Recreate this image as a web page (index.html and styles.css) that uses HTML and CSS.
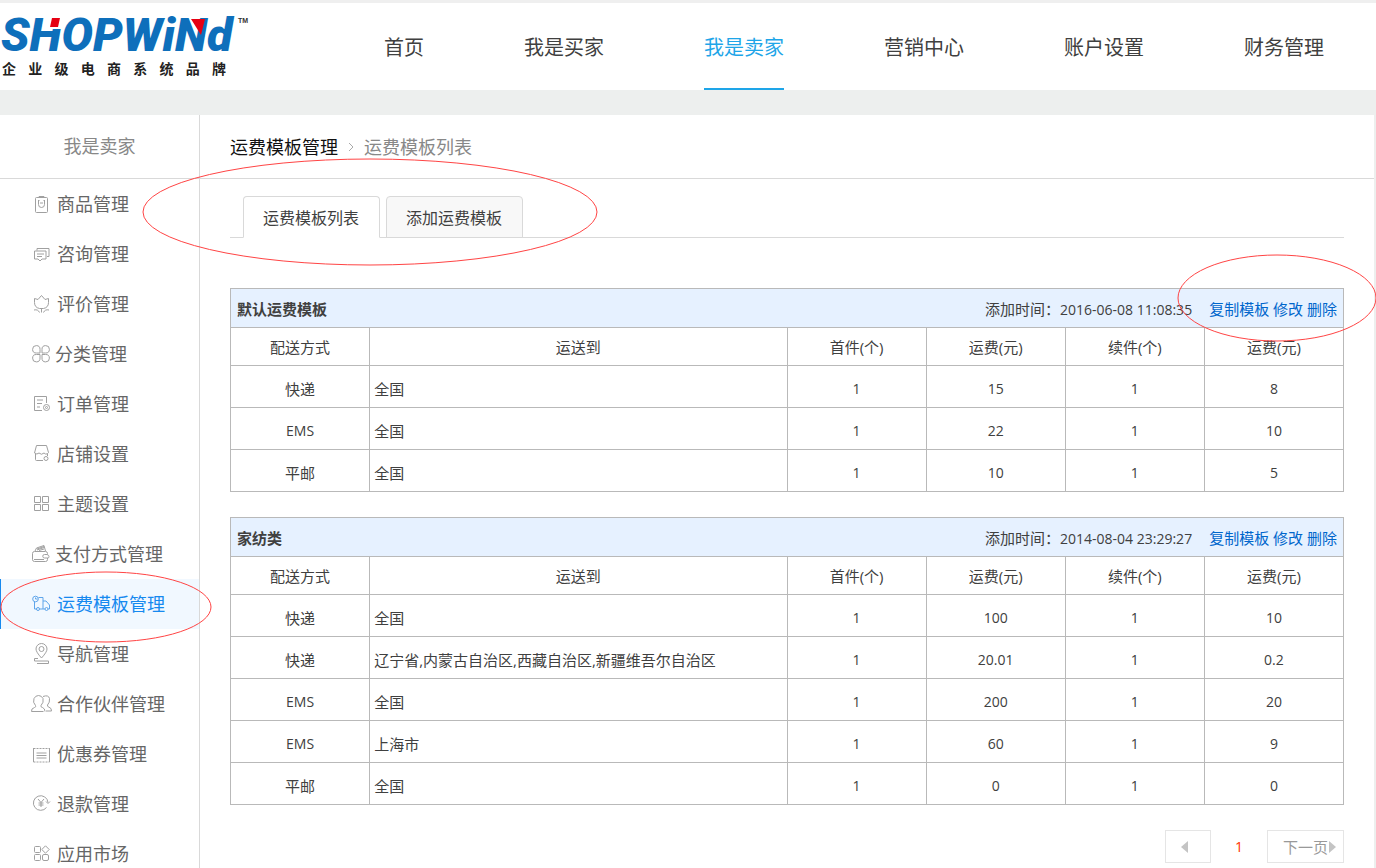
FILE: index.html
```html
<!DOCTYPE html>
<html lang="zh-CN">
<head>
<meta charset="utf-8">
<title>运费模板管理</title>
<link rel="stylesheet" href="styles.css">
</head>
<body>
<header class="header">
  <a class="logo" href="#" aria-label="ShopWind">
    <svg class="logo-mark" viewBox="0 0 250 42" aria-hidden="true">
      <text class="logo-word" x="1" y="38">SHOPWiNd</text>
      <path class="logo-gap" d="M49 3h17l-4 13h-15z"/>
      <path class="logo-red" d="M52 5h8l-2 9h-8z"/>
      <path class="logo-red" d="M191 6h14l-4 16z"/>
      <text class="logo-tm" x="238" y="10">TM</text>
    </svg>
    <span class="slogan"><i>企</i><i>业</i><i>级</i><i>电</i><i>商</i><i>系</i><i>统</i><i>品</i><i>牌</i></span>
  </a>
  <nav class="nav">
    <a href="#">首页</a><a href="#">我是买家</a><a class="current" href="#">我是卖家</a><a href="#">营销中心</a><a href="#">账户设置</a><a href="#">财务管理</a>
  </nav>
</header>
<div class="page">
  <aside class="sidebar">
    <h2 class="side-title">我是卖家</h2>
    <nav class="menu">
      <a href="#"><svg class="icon" viewBox="0 0 18 18"><rect x="3.500" y="2.500" width="12" height="15" rx="1"/><path d="M7 2.500V1.500h5v1M6 5.500h1.500M11.500 5.500H13M6.500 5.500v4q0 3 3 3t3-3v-4M8 8h3"/></svg>商品管理</a>
      <a href="#"><svg class="icon" viewBox="0 0 18 18"><path d="M5 5.500V3.500h12v8h-2M2.500 6H14v8h-4l-2 2-2-2H2.500zM5 9h7M5 11.500h5"/></svg>咨询管理</a>
      <a href="#"><svg class="icon" viewBox="0 0 18 18"><path d="M2.500 3.500 6 4.500l3.500-4 3.500 4 3.500-1v4q0 5-5 6H7.500q-5-1-5-6zM9.500 13.500v4M2 15q4-1 5.500 2.500M17 15q-4-1-5.500 2.500"/></svg>评价管理</a>
      <a href="#" class="near"><svg class="icon" viewBox="0 0 18 18"><path d="M8 8H4.500A3.700 3.700 0 1 1 8 4.500zM10 8h3.500A3.700 3.700 0 1 0 10 4.500zM8 9.500H4.500A3.700 3.700 0 1 0 8 13zM10 9.500h3.500A3.700 3.700 0 1 1 10 13z"/></svg>分类管理</a>
      <a href="#"><svg class="icon" viewBox="0 0 18 18"><path d="M14.500 8V1.500h-12v14H10M5 5h6M5 8.500h5M5 12h3"/><circle cx="14.500" cy="12.500" r="3"/><circle cx="14.500" cy="12.500" r="1"/></svg>订单管理</a>
      <a href="#"><svg class="icon" viewBox="0 0 18 18"><path d="M4.500.5h10l2 7q-1 2-3 1.500L12 8q-2.500 2.500-5 0-2 2-4.500 0zM3.500 9v5.500q0 1 1 1H11M15.500 9v2"/><circle cx="14" cy="13.500" r="2"/></svg>店铺设置</a>
      <a href="#"><svg class="icon" viewBox="0 0 18 18"><path d="M2.500 1.500h6v6h-6zM10.500 1.500h6v6h-6zM2.500 9.500h6v6h-6zM10.500 9.500h6v6h-6z"/></svg>主题设置</a>
      <a href="#" class="near"><svg class="icon" viewBox="0 0 18 18"><path d="M2.500 6.500h11q2 0 2 2v1M15.500 13v1.500q0 2-2 2h-11q-2 0-2-2v-6q0-2 2-2M15 9.500h-2.500a1.700 1.700 0 0 0 0 3.500H16q1 0 1-1.500t-2-2M3 6l1.500-3L12 .5 13.500 6M5 5l7-2.500M5 4l7-2.500M7 5.500l5-1.500M2 14.500h10"/></svg>支付方式管理</a>
      <a class="active" href="#"><svg class="icon" viewBox="0 0 18 18"><circle cx="3.500" cy="4" r="2.800"/><path d="M3.500 2.500V4h2M2.500 7v7H5M6.500 2.500h4.500V14H7.500M11 6h3l3.500 4v4h-1.500M13 14h-2"/><circle cx="6" cy="14" r="1.500"/><circle cx="14.500" cy="14" r="1.500"/></svg>运费模板管理</a>
      <a href="#"><svg class="icon" viewBox="0 0 18 18"><path d="M9.500 13Q4 7 4 4a5.500 5.500 0 0 1 11 0q0 3-5.500 9zM6 13.500H2.500V16h14v2.500H5"/><circle cx="9.500" cy="4" r="2.500"/></svg>导航管理</a>
      <a href="#"><svg class="icon" viewBox="0 0 18 18"><path d="M11.500 16.500H-.5q-.5-3 3-4 2-.7 1-2-3-3-1.500-7 1.500-3 4.500-3t4.500 3q1 4-2 7-.7 1.500 1.500 2 2.500 1 2.500 4M11 1.500q5.500-2 6.500 2 .5 4-2 6.500-.5 1.500 1.500 2.200 2.700.8 2.500 3.800h-5.500"/></svg>合作伙伴管理</a>
      <a href="#"><svg class="icon" viewBox="0 0 18 18"><path d="M1.500 3v14M17.500 3v14M4.500 8h10M4.500 10.500h10M4.500 13h10"/><path stroke-dasharray="2 1" d="M1.500 3.500h16M1.500 17h16"/></svg>优惠券管理</a>
      <a href="#"><svg class="icon" viewBox="0 0 18 18"><path d="M14.500 12.500A7.300 7.300 0 1 1 16 7.500M14 6.500l2 2 2-2M6 4l3 3.500L12 4M9 7.500V12M6.500 8h5M6.500 10h5"/></svg>退款管理</a>
      <a href="#"><svg class="icon" viewBox="0 0 18 18"><rect x="2.500" y="1.500" width="6" height="6" rx="1"/><path d="m13.500.8 3.700 3.700-3.700 3.700-3.700-3.700z"/><rect x="2.500" y="9.500" width="6" height="6" rx="1"/><rect x="10.500" y="9.500" width="6" height="6" rx="1.500"/></svg>应用市场</a>
    </nav>
  </aside>
  <main class="main">
    <div class="crumbs">
      <a href="#">运费模板管理</a>
      <svg class="chevron" viewBox="0 0 6 10"><path d="m1 1 4 4-4 4"/></svg>
      <span>运费模板列表</span>
    </div>
    <div class="content">
      <div class="tabs">
        <a class="tab selected" href="#">运费模板列表</a>
        <a class="tab" href="#">添加运费模板</a>
      </div>

      <table class="rates">
        <colgroup><col class="narrow"><col class="wide"><col class="narrow"><col class="narrow"><col class="narrow"><col class="narrow"></colgroup>
        <thead>
          <tr class="title-row"><th colspan="6"><div class="title-bar"><strong>默认运费模板</strong><span class="added">添加时间：<time>2016-06-08 11:08:35</time></span><span class="actions"><a href="#">复制模板</a> <a href="#">修改</a> <a href="#">删除</a></span></div></th></tr>
          <tr class="head-row"><th>配送方式</th><th>运送到</th><th>首件(个)</th><th>运费(元)</th><th>续件(个)</th><th>运费(元)</th></tr>
        </thead>
        <tbody>
          <tr><td>快递</td><td class="area">全国</td><td>1</td><td>15</td><td>1</td><td>8</td></tr>
          <tr><td class="latin">EMS</td><td class="area">全国</td><td>1</td><td>22</td><td>1</td><td>10</td></tr>
          <tr><td>平邮</td><td class="area">全国</td><td>1</td><td>10</td><td>1</td><td>5</td></tr>
        </tbody>
      </table>

      <table class="rates">
        <colgroup><col class="narrow"><col class="wide"><col class="narrow"><col class="narrow"><col class="narrow"><col class="narrow"></colgroup>
        <thead>
          <tr class="title-row"><th colspan="6"><div class="title-bar"><strong>家纺类</strong><span class="added">添加时间：<time>2014-08-04 23:29:27</time></span><span class="actions"><a href="#">复制模板</a> <a href="#">修改</a> <a href="#">删除</a></span></div></th></tr>
          <tr class="head-row"><th>配送方式</th><th>运送到</th><th>首件(个)</th><th>运费(元)</th><th>续件(个)</th><th>运费(元)</th></tr>
        </thead>
        <tbody>
          <tr><td>快递</td><td class="area">全国</td><td>1</td><td>100</td><td>1</td><td>10</td></tr>
          <tr><td>快递</td><td class="area">辽宁省,内蒙古自治区,西藏自治区,新疆维吾尔自治区</td><td>1</td><td>20.01</td><td>1</td><td>0.2</td></tr>
          <tr><td class="latin">EMS</td><td class="area">全国</td><td>1</td><td>200</td><td>1</td><td>20</td></tr>
          <tr><td class="latin">EMS</td><td class="area">上海市</td><td>1</td><td>60</td><td>1</td><td>9</td></tr>
          <tr><td>平邮</td><td class="area">全国</td><td>1</td><td>0</td><td>1</td><td>0</td></tr>
        </tbody>
      </table>

      <div class="pager">
        <a class="page-btn prev" href="#" aria-label="上一页"><svg class="arrow" viewBox="0 0 7 12"><path d="M7 0v12L0 6z"/></svg></a>
        <span class="page-now">1</span>
        <a class="page-btn next" href="#">下一页<svg class="arrow" viewBox="0 0 7 12"><path d="M0 0v12l7-6z"/></svg></a>
      </div>
    </div>
  </main>
</div>
<svg class="mark mark-tabs" viewBox="0 0 456 108"><ellipse cx="228" cy="54" rx="227" ry="53"/></svg>
<svg class="mark mark-actions" viewBox="0 0 200 88"><ellipse cx="100" cy="44" rx="99" ry="43"/></svg>
<svg class="mark mark-menu" viewBox="0 0 213 72"><ellipse cx="106" cy="36" rx="105" ry="35"/></svg>
</body>
</html>
```

FILE: styles.css
```css
* { box-sizing: border-box; }
body {
  margin: 0;
  position: relative;
  height: 100vh;
  overflow: hidden;
  background: #edefee;
  color: #404040;
  font: 15px/20px "Open Sans", "Noto Sans CJK SC", sans-serif;
}
a { color: inherit; text-decoration: none; }

.header {
  display: flex;
  height: 90px;
  border-top: 3px solid #efefef;
  background: #fff;
}
.logo { width: 384px; padding-top: 10px; flex: none; }
.logo-mark { display: block; width: 250px; height: 42px; overflow: visible; }
.logo-word { font: italic 900 47px Roboto, sans-serif; fill: #0e6fbb; }
.logo-gap { fill: #fff; }
.logo-red { fill: #e60012; }
.logo-tm { font: bold 7px "Liberation Sans", sans-serif; fill: #333; }
.slogan {
  display: flex;
  justify-content: space-between;
  width: 224px;
  margin: 4px 0 0 2px;
  color: #222;
  font-size: 14px;
  font-weight: bold;
}
.slogan i { font-style: normal; }
.nav { display: flex; gap: 100px; font-size: 20px; line-height: 30px; white-space: nowrap; }
.nav a { padding: 30px 0 25px; border-bottom: 2px solid transparent; }
.nav .current { color: #1ea5e8; border-color: #1ea5e8; }

.page {
  display: flex;
  min-height: 100%;
  margin: 25px 2px 0 0;
  background: #fff;
}
.sidebar { width: 200px; flex: none; border-right: 1px solid #d9d9d9; }
.side-title {
  margin: 0;
  height: 64px;
  border-bottom: 1px solid #d9d9d9;
  color: #888;
  font-size: 18px;
  font-weight: normal;
  line-height: 63px;
  text-align: center;
}
.menu a {
  display: flex;
  align-items: center;
  gap: 7px;
  height: 50px;
  padding-left: 31px;
  border-left: 1px solid transparent;
  color: #666;
  font-size: 18px;
}
.menu .near { gap: 5px; }
.menu .active { border-color: #1689ef; background: #f1f8ff; color: #1689ef; }
.icon {
  width: 18px;
  height: 18px;
  overflow: visible;
  fill: none;
  stroke: #a0a0a0;
  stroke-width: 1;
}
.active .icon { stroke: #5fa5ea; }

.main { flex: 1; min-width: 0; }
.crumbs {
  display: flex;
  align-items: center;
  height: 64px;
  padding-left: 30px;
  border-bottom: 1px solid #d9d9d9;
  color: #888;
  font-size: 18px;
}
.crumbs a { color: #111; }
.chevron { width: 6px; height: 10px; margin: 0 10px; fill: none; stroke: #aaa; }
.content { padding: 17px 30px 0; }
.tabs {
  display: flex;
  gap: 6px;
  height: 42px;
  margin-bottom: 50px;
  padding-left: 13px;
  border-bottom: 1px solid #d9d9d9;
}
.tab {
  height: 42px;
  padding: 0 20px 0 19px;
  border: 1px solid #d9d9d9;
  border-radius: 4px 4px 0 0;
  background: #f8f8f8;
  font-size: 16px;
  line-height: 42px;
}
.tab.selected { border-bottom-color: #fff; background: #fff; }

.rates {
  width: 100%;
  margin-bottom: 25px;
  border-collapse: collapse;
  table-layout: fixed;
}
.narrow { width: 12.5%; }
.wide { width: 37.5%; }
.rates th, .rates td {
  height: 42px;
  padding: 5px 4px 0;
  border: 1px solid #b9b9b9;
  font-weight: normal;
  text-align: center;
}
.rates td { font-size: 14px; }
.rates td:first-child, .rates .area { font-size: 15px; }
.rates td.latin:first-child { font-size: 14px; }
.rates .area { text-align: left; }
.rates .head-row th { height: 38px; padding: 0; }
.rates .title-row th { height: 39px; padding: 2px 6px 0; background: #e6f1ff; }
.title-bar { display: flex; }
.title-bar strong { margin-right: auto; }
.added { margin-right: 17px; }
.added time { font-size: 14px; }
.actions { color: #0066cc; }

.pager { display: flex; justify-content: flex-end; color: #999; }
.page-btn {
  display: flex;
  align-items: center;
  height: 33px;
  border: 1px solid #e5e5e5;
}
.prev { width: 46px; padding-left: 14px; }
.next { padding: 0 7px 0 15px; }
.arrow { width: 7px; height: 12px; margin-left: 1px; fill: #c4c4c4; }
.page-now { width: 56px; color: #f30; font-size: 14px; line-height: 33px; text-align: center; }

.mark { position: absolute; fill: none; stroke: #f44; stroke-width: 1; }
.mark-tabs { left: 142px; top: 158px; width: 456px; height: 108px; }
.mark-actions { right: -1px; top: 254px; width: 200px; height: 88px; }
.mark-menu { left: 0; top: 571px; width: 213px; height: 72px; }
```
